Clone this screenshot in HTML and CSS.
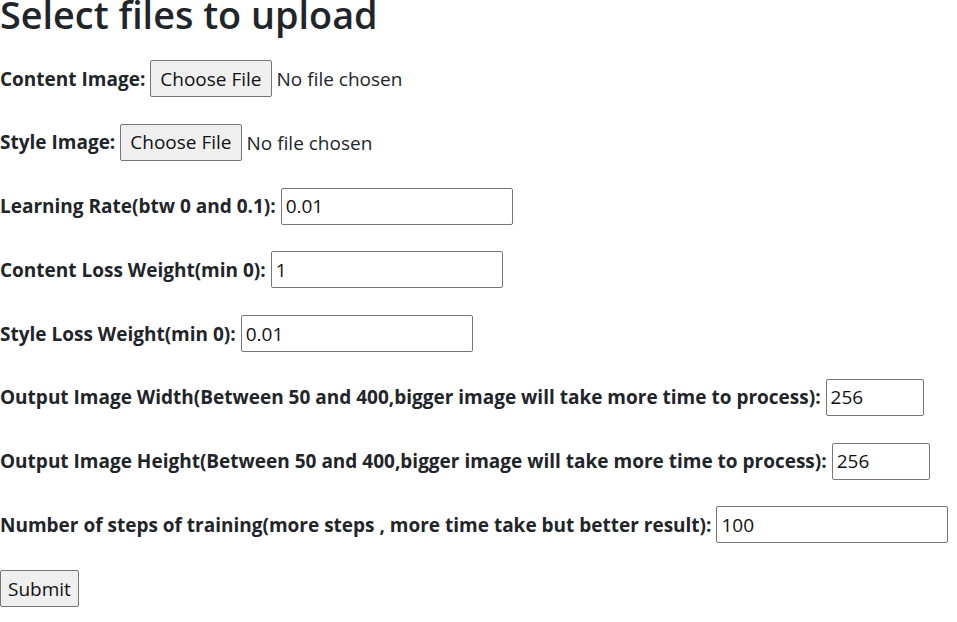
FILE: index.html
```html
<!DOCTYPE html>
<html>
<head>
<meta charset="utf-8">
<title>Upload</title>
<link rel="stylesheet" href="styles.css">
</head>
<body>
<h1 class="title">Select files to upload</h1>
<form class="form">
  <div class="row"><label class="lbl">Content Image:</label><input class="file" type="file"></div>
  <div class="row"><label class="lbl">Style Image:</label><input class="file" type="file"></div>
  <div class="row"><label class="lbl">Learning Rate(btw 0 and 0.1):</label><input class="txt" type="text" value="0.01"></div>
  <div class="row"><label class="lbl">Content Loss Weight(min 0):</label><input class="txt" type="text" value="1"></div>
  <div class="row"><label class="lbl">Style Loss Weight(min 0):</label><input class="txt" type="text" value="0.01"></div>
  <div class="row"><label class="lbl">Output Image Width(Between 50 and 400,bigger image will take more time to process):</label><input class="txt small" type="text" value="256"></div>
  <div class="row"><label class="lbl">Output Image Height(Between 50 and 400,bigger image will take more time to process):</label><input class="txt small" type="text" value="256"></div>
  <div class="row"><label class="lbl">Number of steps of training(more steps , more time take but better result):</label><input class="txt" type="text" value="100"></div>
  <div class="row"><button class="btn" type="button">Submit</button></div>
</form>
</body>
</html>
```
FILE: styles.css
```css
html, body {
  margin: 0;
  padding: 0;
  background: #fff;
}
body {
  font-family: "Open Sans", "Noto Sans", sans-serif;
  font-size: 19px;
  color: #212529;
}
.title {
  font-size: 37.8px;
  font-weight: 600;
  margin: -9px 0 0 0;
  line-height: 48px;
  height: 69px;
  white-space: nowrap;
}
.form {
  display: flex;
  flex-direction: column;
  gap: 26.75px;
}
.row {
  display: flex;
  align-items: center;
  height: 37px;
  white-space: nowrap;
}
.lbl {
  font-weight: 700;
  margin-right: 5px;
}
.file {
  font: inherit;
  color: #212529;
  height: 37px;
  display: flex;
  align-items: center;
}
.file::file-selector-button {
  font: inherit;
  color: #111;
  background: #efefef;
  border: 1px solid #767676;
  border-radius: 2px;
  height: 37px;
  padding: 0 9px;
  margin-right: 5px;
}
.txt {
  font: inherit;
  color: #111;
  box-sizing: border-box;
  width: 232px;
  height: 37px;
  border: 1px solid #767676;
  border-radius: 2px;
  padding: 0 4px;
  margin: 0;
}
.txt.small {
  width: 98px;
}
.btn {
  font: inherit;
  color: #111;
  background: #efefef;
  border: 1px solid #767676;
  border-radius: 2px;
  height: 37px;
  padding: 0 7px;
  margin: 0;
}
```
